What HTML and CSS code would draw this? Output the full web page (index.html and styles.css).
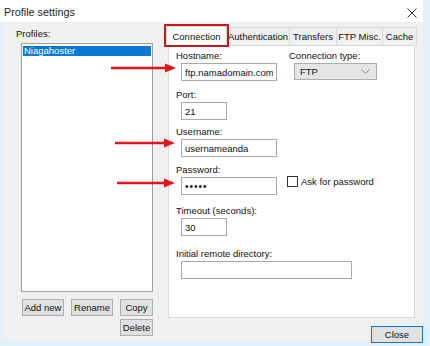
FILE: index.html
```html
<!DOCTYPE html>
<html lang="en">
<head>
  <meta charset="UTF-8">
  <title>Profile settings</title>
  <link rel="stylesheet" href="styles.css">
</head>
<body>
  <div class="window">
    <div class="titlebar">
      <span class="title">Profile settings</span>
      <svg class="close-x" width="10" height="10" viewBox="0 0 10 10">
        <path d="M0.5 0.5 L9.5 9.5 M9.5 0.5 L0.5 9.5" stroke="#333" stroke-width="1" fill="none"/>
      </svg>
    </div>

    <div class="main">
      <!-- Profiles list -->
      <div class="profiles">
        <div class="label">Profiles:</div>
        <div class="profile-list">
          <div class="profile-item selected">Niagahoster</div>
        </div>
        <div class="profile-buttons">
          <button class="btn btn-add">Add new</button>
          <button class="btn btn-rename">Rename</button>
          <button class="btn btn-copy">Copy</button>
        </div>
        <div class="profile-buttons end">
          <button class="btn btn-copy">Delete</button>
        </div>
      </div>

      <!-- Settings tabs -->
      <div class="settings">
        <div class="tabstrip">
          <div class="tab active">Connection</div>
          <div class="tab tab-auth">Authentication</div>
          <div class="tab tab-transfers">Transfers</div>
          <div class="tab tab-misc">FTP Misc.</div>
          <div class="tab tab-cache">Cache</div>
        </div>
        <div class="panel">
          <div class="row">
            <div class="field">
              <div class="label">Hostname:</div>
              <input class="input w-wide" type="text" value="ftp.namadomain.com">
            </div>
            <div class="field field-type">
              <div class="label">Connection type:</div>
              <div class="select">
                <span>FTP</span>
                <svg width="9" height="6" viewBox="0 0 9 6"><path d="M0.5 0.5 L4.5 4.5 L8.5 0.5" stroke="#888" fill="none"/></svg>
              </div>
            </div>
          </div>

          <div class="field f-port">
            <div class="label">Port:</div>
            <input class="input w-short" type="text" value="21">
          </div>

          <div class="field f-user">
            <div class="label">Username:</div>
            <input class="input w-wide" type="text" value="usernameanda">
          </div>

          <div class="field f-pass">
            <div class="label">Password:</div>
            <div class="row">
              <input class="input w-wide pass" type="password" value="abcde">
              <label class="check"><span class="box"></span>Ask for password</label>
            </div>
          </div>

          <div class="field f-timeout">
            <div class="label">Timeout (seconds):</div>
            <input class="input w-short" type="text" value="30">
          </div>

          <div class="field f-dir">
            <div class="label">Initial remote directory:</div>
            <input class="input w-dir" type="text" value="">
          </div>
        </div>

        <div class="footer">
          <button class="btn btn-default">Close</button>
        </div>
      </div>
    </div>

    <!-- red annotation arrows -->
    <svg class="arrows" width="430" height="346" viewBox="0 0 430 346">
      <g fill="#e0161b" stroke="#e0161b">
        <line x1="111" y1="68" x2="167" y2="68" stroke-width="2.5"/>
        <polygon points="176,68 165,63.5 165,72.5" stroke="none"/>
        <line x1="115" y1="143" x2="166" y2="143" stroke-width="2.5"/>
        <polygon points="175,143 164,138.5 164,147.5" stroke="none"/>
        <line x1="117" y1="183" x2="166" y2="183" stroke-width="2.5"/>
        <polygon points="175,183 164,178.5 164,187.5" stroke="none"/>
      </g>
    </svg>
  </div>
</body>
</html>
```

FILE: styles.css
```css
body {
  margin: 0;
  padding: 0;
  width: 430px;
  height: 346px;
  overflow: hidden;
  background: #e3f0fa;
  font-family: "Liberation Sans", Arial, sans-serif;
  font-size: 9.5px;
  color: #111;
}

.window {
  position: relative;
  margin-left: 2px;
  width: 421px;
  height: 340px;
  background: #f0f0f0;
}

.titlebar {
  height: 22px;
  margin-left: -2px;
  padding: 0 6px 0 4px;
  display: flex;
  align-items: center;
  justify-content: space-between;
  background: #fff;
}

.title {
  font-size: 10.8px;
  color: #222;
  padding-top: 2px;
}

.close-x {
  margin-top: 3px;
}

.label {
  line-height: 11px;
  height: 11px;
  white-space: nowrap;
}

.main {
  display: flex;
  padding-left: 14px;
}

/* Profiles column */
.profiles {
  width: 137px;
  padding-top: 6px;
}

.profile-list {
  margin: 4px 0 0 5px;
  width: 132px;
  height: 249px;
  box-sizing: border-box;
  border: 1px solid #9a9ea6;
  background: #fff;
  padding: 2px 1px;
}

.profile-item {
  height: 10px;
  line-height: 10px;
  padding-left: 1px;
}

.profile-item.selected {
  background: #0a78d7;
  color: #fff;
}

.profile-buttons {
  display: flex;
  gap: 7px;
  margin: 7px 0 0 6px;
}

.profile-buttons.end {
  justify-content: flex-end;
  margin-top: 3px;
}

.btn {
  height: 17px;
  box-sizing: border-box;
  padding: 0;
  border: 1px solid #adadad;
  background: #e1e1e1;
  font-family: inherit;
  font-size: 9.5px;
  color: #111;
}

.btn-add,
.btn-rename {
  width: 42px;
}

.btn-copy {
  width: 33px;
}

/* Settings tabs */
.settings {
  margin-left: 15px;
  padding-top: 3px;
}

.tabstrip {
  display: flex;
  align-items: flex-end;
  margin-left: -2px;
  height: 20px;
}

.tab {
  height: 18px;
  line-height: 17px;
  box-sizing: border-box;
  text-align: center;
  border: 1px solid #d9d9d9;
  border-bottom: none;
  border-left: none;
  background: #f0f0f0;
  white-space: nowrap;
}

.tab.active {
  position: relative;
  width: 61px;
  height: 20px;
  line-height: 19px;
  border-left: 1px solid #d9d9d9;
  background: #fff;
  z-index: 1;
  margin-bottom: -1px;
}

.tab.active::after {
  content: "";
  position: absolute;
  left: -3px;
  top: -3px;
  right: -3px;
  bottom: -1px;
  border: 2px solid #c8161d;
}

.tab-auth { width: 63px; }
.tab-transfers { width: 47px; }
.tab-misc { width: 46px; }
.tab-cache { width: 34px; }

.panel {
  width: 247px;
  height: 273px;
  box-sizing: border-box;
  border: 1px solid #d9d9d9;
  background: #fff;
  padding: 4px 0 0 7px;
}

.row {
  display: flex;
  align-items: flex-start;
}

.field .input,
.field .select {
  margin: 2px 0 0 5px;
}

.field-type {
  margin-left: 12px;
}

.input {
  display: block;
  height: 18px;
  box-sizing: border-box;
  border: 1px solid #a9a9a9;
  background: #fff;
  padding: 0 3px;
  font-family: inherit;
  font-size: 9.5px;
  color: #111;
  outline: none;
}

.input.pass {
  font-size: 10px;
  letter-spacing: 1px;
}

.w-wide { width: 96px; }
.w-short { width: 46px; }
.w-dir { width: 171px; }

.select {
  width: 83px;
  height: 17px;
  box-sizing: border-box;
  border: 1px solid #acacac;
  background: #e5e5e5;
  display: flex;
  align-items: center;
  justify-content: space-between;
  padding: 0 6px 0 5px;
}

.f-port { margin-top: 8px; }
.f-user { margin-top: 6px; }
.f-pass { margin-top: 7px; }
.f-timeout { margin-top: 10px; }
.f-dir { margin-top: 12px; }

.check {
  display: flex;
  align-items: center;
  margin: 1px 0 0 10px;
  white-space: nowrap;
}

.check .box {
  width: 11px;
  height: 11px;
  box-sizing: border-box;
  border: 1px solid #333;
  background: #fff;
  margin-right: 3px;
}

.footer {
  display: flex;
  justify-content: flex-end;
  margin-right: -6px;
  padding-top: 8px;
}

.btn-default {
  width: 52px;
  border: 1px solid #0078d7;
}

.arrows {
  position: absolute;
  left: -2px;
  top: 0;
  pointer-events: none;
}
```
